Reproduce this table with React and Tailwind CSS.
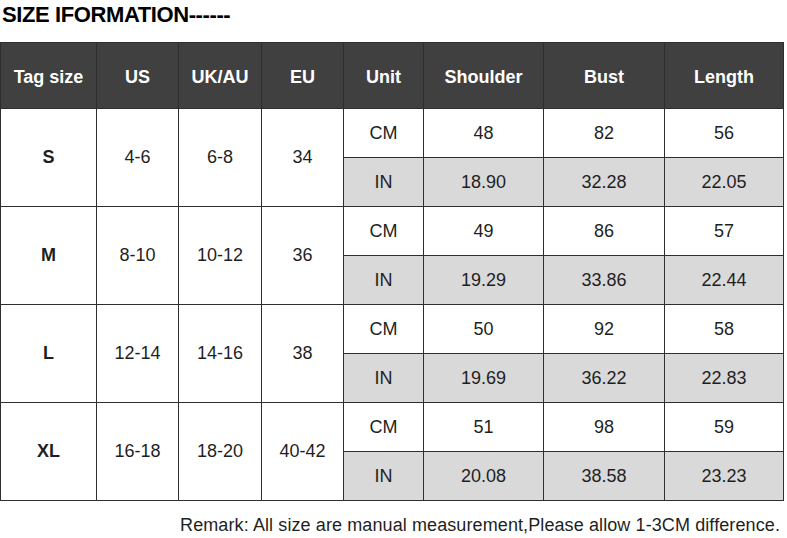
import React from "react";

const rows = [
  { tag: "S", us: "4-6", uk: "6-8", eu: "34", cm: ["48", "82", "56"], inch: ["18.90", "32.28", "22.05"] },
  { tag: "M", us: "8-10", uk: "10-12", eu: "36", cm: ["49", "86", "57"], inch: ["19.29", "33.86", "22.44"] },
  { tag: "L", us: "12-14", uk: "14-16", eu: "38", cm: ["50", "92", "58"], inch: ["19.69", "36.22", "22.83"] },
  { tag: "XL", us: "16-18", uk: "18-20", eu: "40-42", cm: ["51", "98", "59"], inch: ["20.08", "38.58", "23.23"] },
];

const headers = ["Tag size", "US", "UK/AU", "EU", "Unit", "Shoulder", "Bust", "Length"];
const widths = ["w-[96px]", "w-[82px]", "w-[83px]", "w-[82px]", "w-[80px]", "w-[120px]", "w-[121px]", "w-[119px]"];

const cell = "border border-[#2f2f2f] text-center align-middle p-0";

export default function App() {
  return (
    <div className="w-[787px] h-[538px] bg-white text-[#1f1f1f]" style={{ fontFamily: '"Liberation Sans", Arial, sans-serif' }}>
      <h1 className="pl-[2px] pt-[2px] text-[22px] font-bold leading-[26px] tracking-[-0.4px] text-black">SIZE IFORMATION------</h1>
      <table className="mt-[14px] border-collapse table-fixed w-[784px]">
        <colgroup>
          {widths.map((w, i) => (
            <col key={i} className={w} />
          ))}
        </colgroup>
        <thead>
          <tr className="h-[66px] bg-[#404040]">
            {headers.map((h) => (
              <th key={h} className={`${cell} pt-[3px] text-white text-[18px] font-bold`}>
                {h}
              </th>
            ))}
          </tr>
        </thead>
        <tbody className="text-[18px]">
          {rows.map((r) => (
            <React.Fragment key={r.tag}>
              <tr className="h-[49px]">
                <td rowSpan={2} className={`${cell} font-bold`}>{r.tag}</td>
                <td rowSpan={2} className={cell}>{r.us}</td>
                <td rowSpan={2} className={cell}>{r.uk}</td>
                <td rowSpan={2} className={cell}>{r.eu}</td>
                <td className={cell}>CM</td>
                {r.cm.map((v, i) => (
                  <td key={i} className={cell}>{v}</td>
                ))}
              </tr>
              <tr className="h-[49px] bg-[#d9d9d9]">
                <td className={cell}>IN</td>
                {r.inch.map((v, i) => (
                  <td key={i} className={cell}>{v}</td>
                ))}
              </tr>
            </React.Fragment>
          ))}
        </tbody>
      </table>
      <p className="mt-[14px] pr-[7px] text-right text-[18px] leading-[20px] tracking-[0.1px] text-[#1f1f1f]">
        Remark: All size are manual measurement,Please allow 1-3CM difference.
      </p>
    </div>
  );
}
